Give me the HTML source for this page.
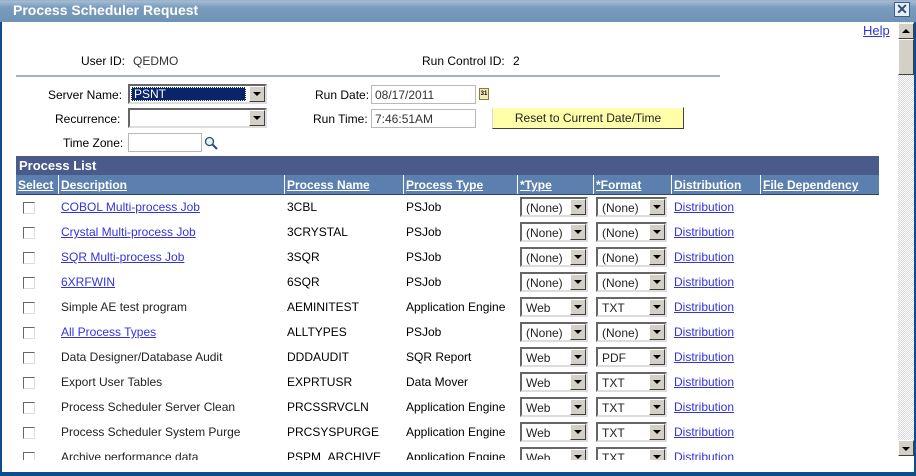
<!DOCTYPE html>
<html><head><meta charset="utf-8">
<style>
*{margin:0;padding:0;box-sizing:border-box}
body{width:916px;height:476px;overflow:hidden;background:#fff;font-family:"Liberation Sans",Arial,sans-serif;font-size:12px;color:#000;position:relative}
.a{position:absolute;white-space:nowrap}
.title{left:0;top:0;width:916px;height:22px;background:linear-gradient(#a3bdd4,#7a9cbd 30%,#6f93b7);color:#fff;font-weight:bold;font-size:14px;padding:1px 0 0 13px;border-top:1px solid #9fb3c8}
.lnk{color:#3333dd;text-decoration:underline}
.inp{border:1px solid #b8b8b8;background:#fff;height:19px;padding:2px 3px;color:#333}
.sel{height:20px;border:2px solid;border-color:#666 #ddd #ddd #666;background:#fff;padding:2px 4px 0;color:#222}
.sel .b{position:absolute;right:0;top:0;width:16px;height:16px;background:#d4d0c8;border:1px solid;border-color:#fff #404040 #404040 #fff}
.sel .b:after{content:"";position:absolute;left:3px;top:5px;border-left:4px solid transparent;border-right:4px solid transparent;border-top:4px solid #000}
.hd{top:175px;height:19px;background:#5b80b0;border-left:1px solid #fff;color:#fff;font-weight:bold;text-decoration:underline;padding:3px 0 0 2px}
.cb{width:12px;height:12px;border:1px solid;border-color:#666 #ddd #ddd #666;background:#fff}
</style></head><body>
<div class="a title">Process Scheduler Request</div>
<div class="a" style="left:894px;top:2px;width:16px;height:15px;background:#e8eef5;border:1px solid #3a5f8a;color:#2b4b78;font-size:14px;line-height:12px;text-align:center;font-weight:bold">✕</div>
<div class="a" style="left:0;top:22px;width:2px;height:454px;background:#0d4c8d"></div>
<div class="a" style="left:914px;top:22px;width:2px;height:454px;background:#0d4c8d"></div>
<div class="a" style="left:0;top:472px;width:916px;height:4px;background:#0d4c8d"></div>
<div class="a" style="left:898px;top:22px;width:16px;height:450px;background:repeating-conic-gradient(#d8d8d8 0 25%,#fff 0 50%) 0 0/2px 2px"></div>
<div class="a" style="left:898px;top:23px;width:16px;height:16px;background:#d4d0c8;border:1px solid;border-color:#fff #404040 #404040 #fff"></div>
<div class="a" style="left:902px;top:29px;border-left:4px solid transparent;border-right:4px solid transparent;border-bottom:4px solid #000"></div>
<div class="a" style="left:898px;top:39px;width:16px;height:36px;background:#d4d0c8;border:1px solid;border-color:#fff #404040 #404040 #fff"></div>
<div class="a" style="left:898px;top:440px;width:16px;height:16px;background:#d4d0c8;border:1px solid;border-color:#fff #404040 #404040 #fff"></div>
<div class="a" style="left:902px;top:447px;border-left:4px solid transparent;border-right:4px solid transparent;border-top:4px solid #000"></div>
<div class="a" style="left:898px;top:456px;width:16px;height:16px;background:#fff"></div>

<div class="a lnk" style="left:863px;top:23px;font-size:13px">Help</div>
<div class="a" style="left:81px;top:54px">User ID:</div>
<div class="a" style="left:133px;top:54px;color:#333">QEDMO</div>
<div class="a" style="left:422px;top:54px">Run Control ID:</div>
<div class="a" style="left:513px;top:54px">2</div>
<div class="a" style="left:16px;top:75px;width:704px;height:2px;background:#9fb0c8"></div>

<div class="a" style="left:48px;top:88px">Server Name:</div>
<div class="a sel" style="left:128px;top:84px;width:139px;padding-top:1px"><span style="background:#0a246a;color:#fff;display:block;width:115px;height:14px;padding-left:2px;margin-left:-3px;border:1px dotted #fff;line-height:13px">PSNT</span><div class="b"></div></div>
<div class="a" style="left:55px;top:112px">Recurrence:</div>
<div class="a sel" style="left:128px;top:108px;width:139px"><div class="b"></div></div>
<div class="a" style="left:63px;top:136px">Time Zone:</div>
<div class="a inp" style="left:128px;top:133px;width:74px"></div>
<svg class="a" style="left:204px;top:136px" width="14" height="14" viewBox="0 0 14 14"><circle cx="5.5" cy="5.5" r="4" fill="#e6f2fb" stroke="#2a4d74" stroke-width="1.3"/><line x1="8.5" y1="8.5" x2="13" y2="13" stroke="#2a4d74" stroke-width="2"/></svg>

<div class="a" style="left:315px;top:88px">Run Date:</div>
<div class="a inp" style="left:371px;top:85px;width:105px">08/17/2011</div>
<div class="a" style="left:479px;top:88px;width:10px;height:12px;background:#f5e9b8;border:1px solid #8a7a40;font-size:6px;font-weight:bold;line-height:10px;text-align:center">31</div>
<div class="a" style="left:313px;top:112px">Run Time:</div>
<div class="a inp" style="left:371px;top:109px;width:105px">7:46:51AM</div>
<div class="a" style="left:492px;top:107px;width:192px;height:22px;background:#ffffaa;border:1px solid;border-color:#fff #404040 #404040 #ddd;text-align:center;padding-top:3px;color:#222">Reset to Current Date/Time</div>

<div class="a" style="left:16px;top:156px;width:863px;height:19px;background:#4a5a8a;color:#fff;font-weight:bold;font-size:13px;padding:2px 0 0 3px">Process List</div>
<div class="a" style="left:16px;top:194px;width:863px;height:1px;background:#2b4478"></div>
<div class="a hd" style="left:16px;width:42px;border-left:0">Select</div>
<div class="a hd" style="left:58px;width:226px">Description</div>
<div class="a hd" style="left:284px;width:119px">Process Name</div>
<div class="a hd" style="left:403px;width:114px">Process Type</div>
<div class="a hd" style="left:517px;width:76px">*Type</div>
<div class="a hd" style="left:593px;width:78px">*Format</div>
<div class="a hd" style="left:671px;width:89px">Distribution</div>
<div class="a hd" style="left:760px;width:119px">File Dependency</div>

<div class="a" style="left:0;top:195px;width:898px;height:265px;overflow:hidden">
<div id="rows"></div>
</div>
<script>
var d=[["COBOL Multi-process Job",1,"3CBL","PSJob","(None)","(None)"],
["Crystal Multi-process Job",1,"3CRYSTAL","PSJob","(None)","(None)"],
["SQR Multi-process Job",1,"3SQR","PSJob","(None)","(None)"],
["6XRFWIN",1,"6SQR","PSJob","(None)","(None)"],
["Simple AE test program",0,"AEMINITEST","Application Engine","Web","TXT"],
["All Process Types",1,"ALLTYPES","PSJob","(None)","(None)"],
["Data Designer/Database Audit",0,"DDDAUDIT","SQR Report","Web","PDF"],
["Export User Tables",0,"EXPRTUSR","Data Mover","Web","TXT"],
["Process Scheduler Server Clean",0,"PRCSSRVCLN","Application Engine","Web","TXT"],
["Process Scheduler System Purge",0,"PRCSYSPURGE","Application Engine","Web","TXT"],
["Archive performance data",0,"PSPM_ARCHIVE","Application Engine","Web","TXT"]];
var h="";
d.forEach(function(r,i){var y=i*25+2;
h+='<div class="a cb" style="left:23px;top:'+(y+5)+'px"></div>';
h+='<div class="a'+(r[1]?' lnk':'')+'" style="left:61px;top:'+(y+3)+'px;color:'+(r[1]?'#3333dd':'#222')+'">'+r[0]+'</div>';
h+='<div class="a" style="left:287px;top:'+(y+3)+'px">'+r[2]+'</div>';
h+='<div class="a" style="left:406px;top:'+(y+3)+'px">'+r[3]+'</div>';
h+='<div class="a sel" style="left:520px;top:'+y+'px;width:68px">'+r[4]+'<div class="b"></div></div>';
h+='<div class="a sel" style="left:596px;top:'+y+'px;width:71px">'+r[5]+'<div class="b"></div></div>';
h+='<div class="a lnk" style="left:674px;top:'+(y+3)+'px">Distribution</div>';});
document.getElementById("rows").innerHTML=h;
</script>
</body></html>
